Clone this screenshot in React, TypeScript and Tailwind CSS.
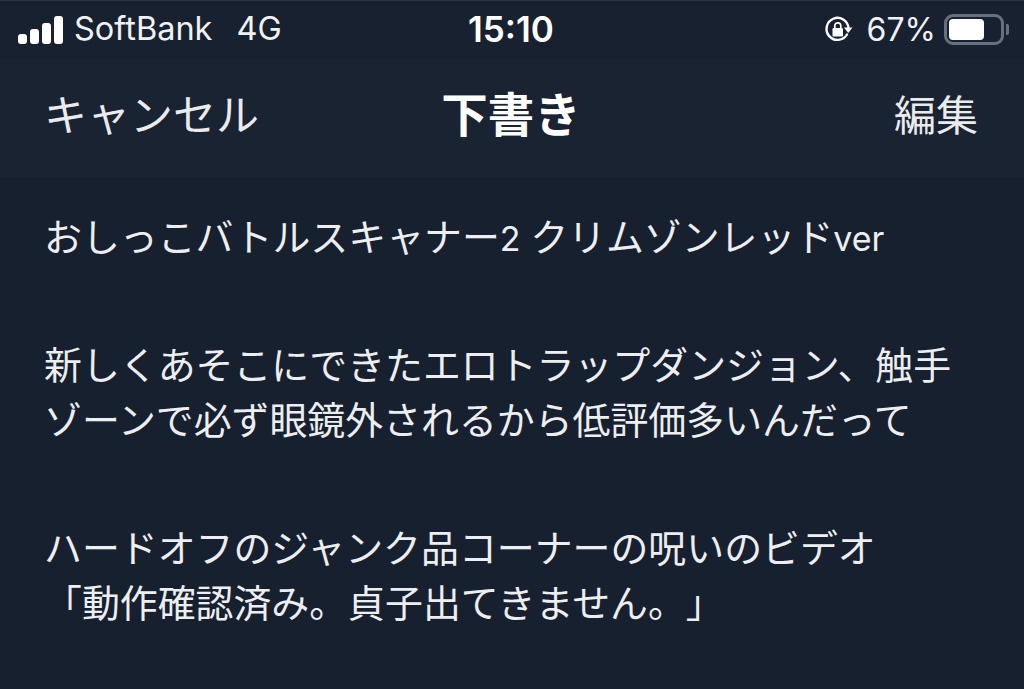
import "react";

const JP = "font-['Inter','Noto_Sans_CJK_JP',sans-serif]";

const Lines = (props: { lines: React.ReactNode[]; className?: string }) => (
  <div className={props.className}>
    {props.lines.map((l, i) => (
      <div key={i} className="h-[55px] leading-[55px] whitespace-nowrap">
        {l}
      </div>
    ))}
  </div>
);

const SignalIcon = () => (
  <div className="flex items-end gap-[3px]">
    <div className="w-[9px] h-[10px] rounded-[3px] bg-white" />
    <div className="w-[9px] h-[15px] rounded-[3px] bg-white" />
    <div className="w-[9px] h-[21px] rounded-[3px] bg-white" />
    <div className="w-[9px] h-[28px] rounded-[3px] bg-white" />
  </div>
);

const RotationLockIcon = () => (
  <svg width="30" height="30" viewBox="0 0 30 30" fill="none">
    <path d="M24 19.5A11 11 0 1 1 25.5 13" stroke="white" strokeWidth="2.4" strokeLinecap="round" />
    <path d="M21 12.5h8.5L25.2 18z" fill="white" />
    <rect x="9.5" y="13" width="10.5" height="8.5" rx="1.2" fill="white" />
    <path d="M11.8 13v-2.2a3 3 0 0 1 6 0V13" stroke="white" strokeWidth="1.7" />
  </svg>
);

const BatteryIcon = () => (
  <div className="flex items-center">
    <div className="w-[60px] h-[31px] rounded-[9px] border-[3px] border-[#667080] p-[2px]">
      <div className="w-[35px] h-full rounded-[4px] bg-white" />
    </div>
    <div className="ml-[2px] w-[3px] h-[11px] rounded-r-[2px] bg-[#667080]" />
  </div>
);

export default function App() {
  return (
    <div className={`w-[1024px] h-[689px] overflow-hidden bg-[#17202e] text-white [text-spacing-trim:space-all] ${JP}`}>
      <div className="h-[58px] flex items-center justify-between pl-[18px] pr-[15px] bg-[#18212f] border-t border-[#2b3441]">
        <div className="w-[340px] flex items-center">
          <SignalIcon />
          <span className="ml-[11px] text-[32.5px] text-[#f0f1f3]">SoftBank</span>
          <span className="ml-[24px] text-[32.5px] text-[#f0f1f3]">4G</span>
        </div>
        <span className="mr-[5px] text-[35px] font-semibold">15:10</span>
        <div className="w-[340px] flex items-center justify-end">
          <RotationLockIcon />
          <span className="ml-[14px] mr-[8px] text-[32px] text-[#f0f1f3]">67%</span>
          <BatteryIcon />
        </div>
      </div>
      <div className="h-[119px] flex items-center justify-between pl-[44px] pr-[46px] pb-[4px] bg-[#1a2331]">
        <span className="w-[300px] text-[43px] text-[#e9ebed]">キャンセル</span>
        <span className="text-[46.5px] font-bold">下書き</span>
        <span className="w-[300px] text-right text-[42px] text-[#e9ebed]">編集</span>
      </div>
      <div className="pl-[44px] pt-[33px] text-[37.9px] text-[#eceef0]">
        <Lines
          lines={[
            <>
              おしっこバトルスキャナー
              <span className="text-[34px]">2 </span>
              クリムゾンレッド
              <span className="text-[34px]">ver</span>
            </>,
          ]}
        />
        <Lines
          className="mt-[73px]"
          lines={[
            "新しくあそこにできたエロトラップダンジョン、触手",
            "ゾーンで必ず眼鏡外されるから低評価多いんだって",
          ]}
        />
        <Lines
          className="mt-[73px]"
          lines={[
            "ハードオフのジャンク品コーナーの呪いのビデオ",
            "「動作確認済み。貞子出てきません。」",
          ]}
        />
      </div>
    </div>
  );
}
